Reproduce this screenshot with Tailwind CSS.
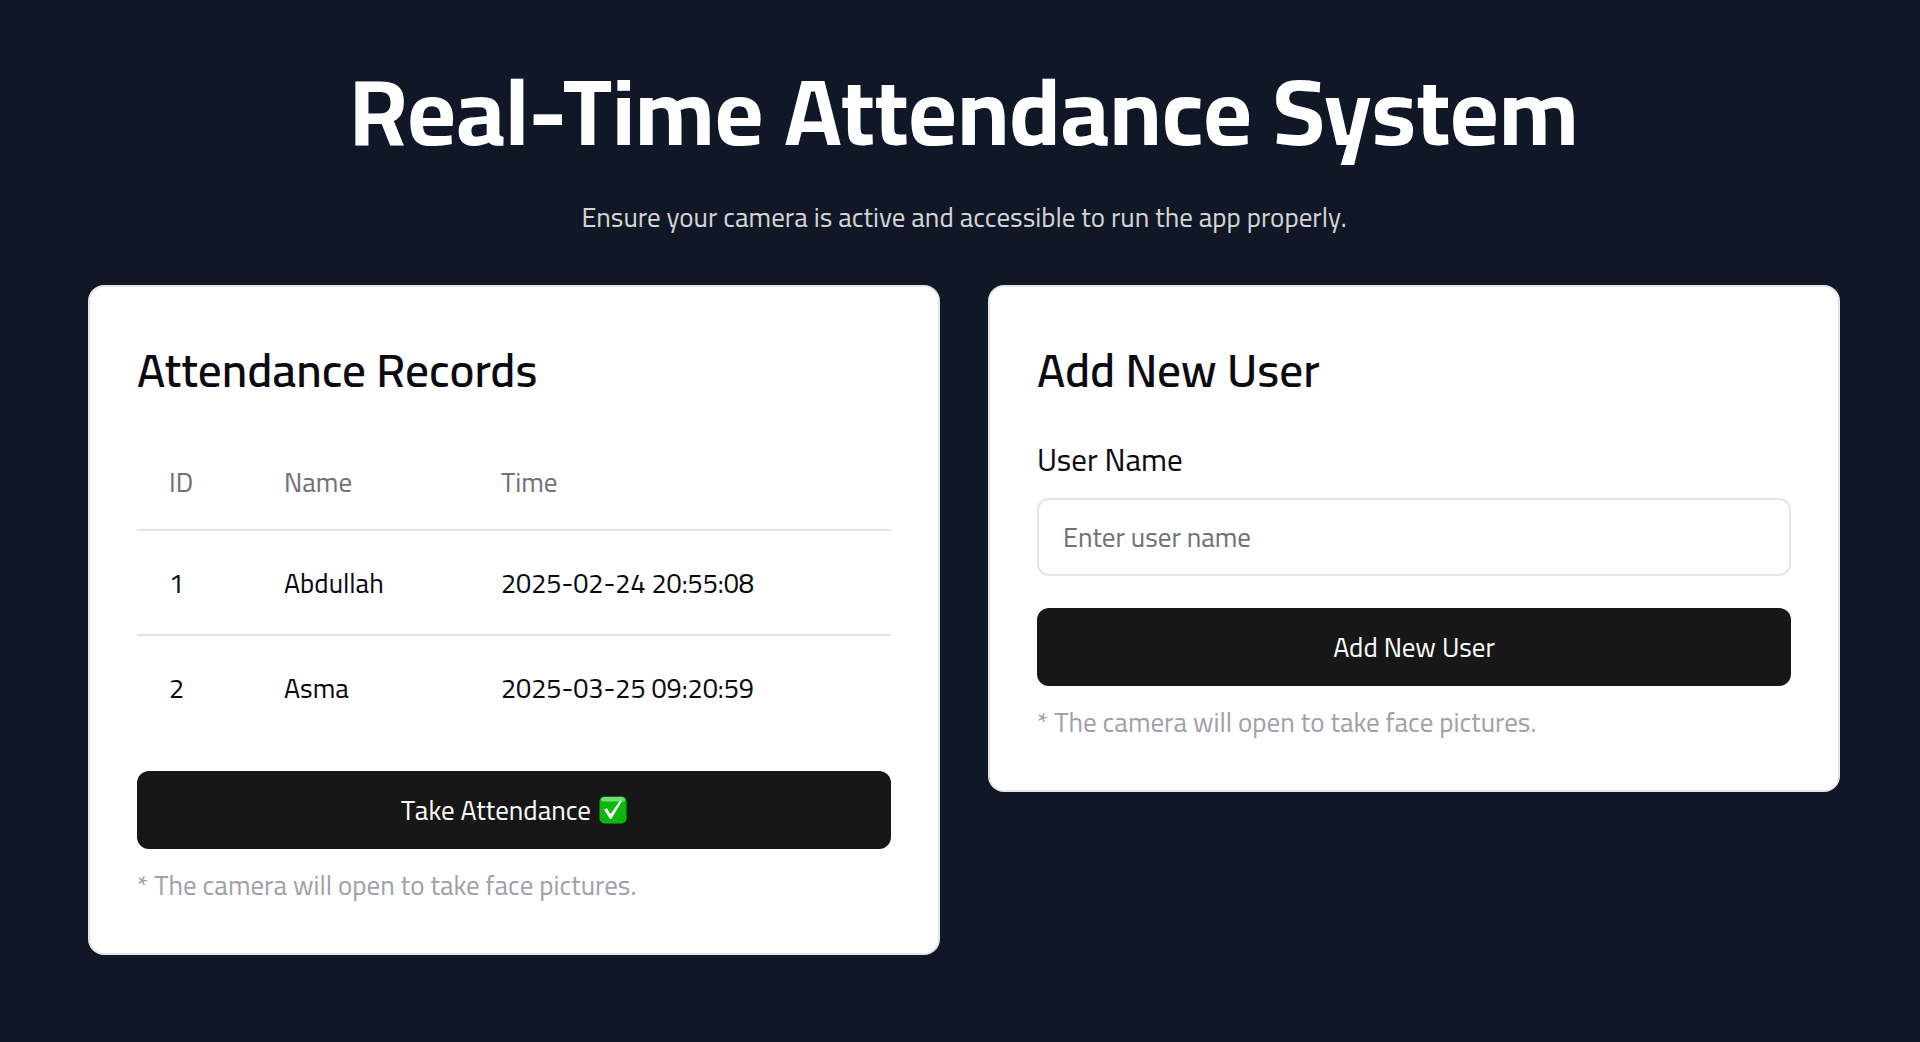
<!DOCTYPE html>
<html lang="en">
<head>
  <meta charset="UTF-8">
  <meta name="viewport" content="width=device-width, initial-scale=1.0">
  <title>Real-Time Attendance System</title>
  <script src="https://cdn.jsdelivr.net/npm/@tailwindcss/browser@4"></script>
</head>
<body class="min-h-screen bg-[#101726] font-['Cairo','Titillium_Web','Roboto',sans-serif] text-[27px] leading-10 text-[#0a0a12]">
  <main class="pt-[61px] pb-20 pl-22 pr-20">
    <!-- Page header -->
    <header class="text-center mb-12">
      <h1 class="text-[94px] leading-[100px] font-bold text-white">Real-Time Attendance System</h1>
      <p class="mt-9 text-[#d4d4d4]">Ensure your camera is active and accessible to run the app properly.</p>
    </header>

    <div class="grid grid-cols-2 gap-12 items-start">
      <!-- Attendance records -->
      <section class="bg-white border-2 border-[#e5e5e5] rounded-2xl px-[47px] pt-[59px] pb-12">
        <h2 class="text-[47px] leading-12 font-semibold mb-10">Attendance Records</h2>
        <table class="w-full text-left">
          <thead>
            <tr class="h-24 border-b-2 border-[#e5e5e5] text-[#71717a]">
              <th class="w-[115px] px-8 font-normal">ID</th>
              <th class="w-[217px] px-8 font-normal">Name</th>
              <th class="px-8 font-normal">Time</th>
            </tr>
          </thead>
          <tbody>
            <tr class="h-[105px] border-b-2 border-[#e5e5e5]">
              <td class="px-8">1</td>
              <td class="px-8">Abdullah</td>
              <td class="px-8">2025-02-24 20:55:08</td>
            </tr>
            <tr class="h-[105px]">
              <td class="px-8">2</td>
              <td class="px-8">Asma</td>
              <td class="px-8">2025-03-25 09:20:59</td>
            </tr>
          </tbody>
        </table>
        <button type="button" class="mt-[31px] mb-4 w-full h-[78px] flex items-center justify-center gap-2 rounded-xl bg-[#171717] text-[#fafafa]">
          Take Attendance
          <svg class="size-7" viewBox="0 0 28 28" aria-hidden="true">
            <rect x="0.5" y="0.5" width="27" height="27" rx="5" fill="#08b90c"/>
            <path d="M5.500 1h17q3 0 3.500 2.500q0 2-2 2H4q-2 0-2-2Q2.500 1 5.500 1z" fill="#72dc75"/>
            <path d="M5 13.500l3-1.300 3.500 5.800L20.500 5.300h2.300L12.300 23h-1.300z" fill="#fff"/>
          </svg>
        </button>
        <p class="text-[#a1a1aa]">* The camera will open to take face pictures.</p>
      </section>

      <!-- Add new user -->
      <section class="bg-white border-2 border-[#e5e5e5] rounded-2xl px-[47px] pt-[59px] pb-12">
        <h2 class="text-[47px] leading-12 font-semibold mb-[46px]">Add New User</h2>
        <label for="user-name" class="block text-[31px] leading-10 mb-[18px]">User Name</label>
        <input type="text" id="user-name" placeholder="Enter user name" class="block w-full h-[78px] px-6 mb-8 border-2 border-[#e5e5e5] rounded-xl placeholder:text-[#71717a]">
        <button type="button" class="mb-4 w-full h-[78px] flex items-center justify-center rounded-xl bg-[#171717] text-[#fafafa]">Add New User</button>
        <p class="text-[#a1a1aa]">* The camera will open to take face pictures.</p>
      </section>
    </div>
  </main>
</body>
</html>
